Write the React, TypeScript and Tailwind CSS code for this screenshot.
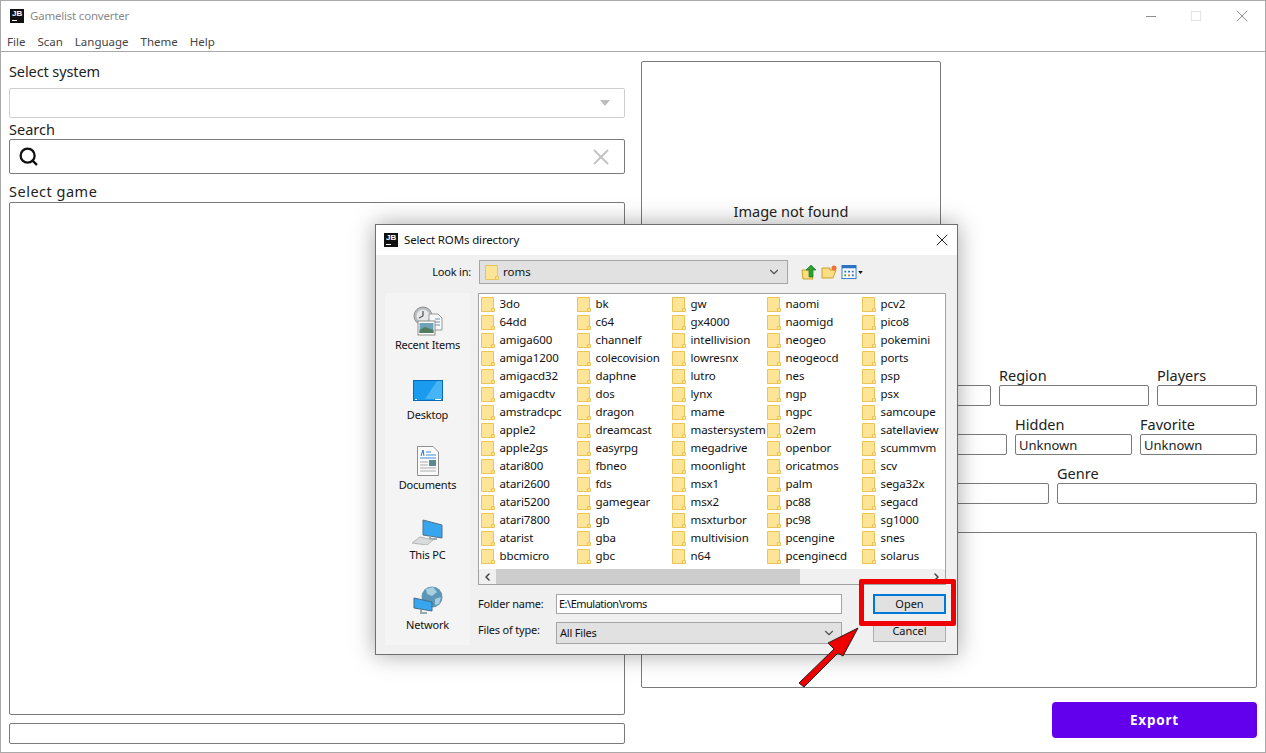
import { Search, X, ChevronDown, ChevronLeft, ChevronRight } from "lucide-react";

const columns = [
  ["3do", "64dd", "amiga600", "amiga1200", "amigacd32", "amigacdtv", "amstradcpc", "apple2", "apple2gs", "atari800", "atari2600", "atari5200", "atari7800", "atarist", "bbcmicro"],
  ["bk", "c64", "channelf", "colecovision", "daphne", "dos", "dragon", "dreamcast", "easyrpg", "fbneo", "fds", "gamegear", "gb", "gba", "gbc"],
  ["gw", "gx4000", "intellivision", "lowresnx", "lutro", "lynx", "mame", "mastersystem", "megadrive", "moonlight", "msx1", "msx2", "msxturbor", "multivision", "n64"],
  ["naomi", "naomigd", "neogeo", "neogeocd", "nes", "ngp", "ngpc", "o2em", "openbor", "oricatmos", "palm", "pc88", "pc98", "pcengine", "pcenginecd"],
  ["pcv2", "pico8", "pokemini", "ports", "psp", "psx", "samcoupe", "satellaview", "scummvm", "scv", "sega32x", "segacd", "sg1000", "snes", "solarus"],
];

const columnWidths = ["w-[96px]", "w-[95px]", "w-[95px]", "w-[95px]", "w-[84px]"];

function JbLogo() {
  return (
    <div className="flex h-[14px] w-[14px] shrink-0 flex-col items-start bg-[#111] px-[2px] pt-[1px] text-white">
      <span className="text-[8px] font-bold leading-[8px] font-['Liberation_Sans',sans-serif]">JB</span>
      <span className="mt-[1.5px] h-[1px] w-[5px] bg-white" />
    </div>
  );
}

function Folder({ className = "h-[15px] w-[14px]" }: { className?: string }) {
  return (
    <svg viewBox="0 0 14 15" className={`shrink-0 ${className}`}>
      <path d="M0.5 0.5H12.5V11.5H13.5V14.5H0.5Z" fill="#fde496" stroke="#eac555" />
      <path d="M12.5 11.5H10.5V14.5" fill="none" stroke="#eac555" />
    </svg>
  );
}

function TextBox({ className = "", children }: { className?: string; children?: string }) {
  return (
    <div className={`flex h-[21px] items-center rounded-[2px] border border-[#7a7a7a] bg-white px-[3px] pt-[2px] text-[13px] text-[#222] ${className}`}>
      {children}
    </div>
  );
}

function Field({ label, className, value }: { label: string; className: string; value?: string }) {
  return (
    <div className={`flex flex-col ${className}`}>
      <span className="h-[20px] text-[14.5px] leading-[20px] text-[#222]">{label}</span>
      <TextBox>{value}</TextBox>
    </div>
  );
}

function RecentIcon() {
  return (
    <svg viewBox="0 0 30 30" className="h-[30px] w-[30px]">
      <circle cx="10" cy="10" r="9" fill="#b9bdc1" stroke="#8a8d90" />
      <circle cx="10" cy="10" r="6.5" fill="#e6e8ea" />
      <path d="M10 5V10L6 12" fill="none" stroke="#333" />
      <path d="M16 8H25L29 12V24H16Z" fill="#f7f7f7" stroke="#9a9a9a" />
      <path d="M22 13H27M22 16H27M22 19H27" stroke="#6b93c2" />
      <rect x="5" y="15" width="17" height="14" fill="#fff" stroke="#8c8c8c" />
      <rect x="6.5" y="17" width="14" height="10" fill="#6fa3b8" />
      <path d="M6.5 24L12 21L20.5 24V27H6.5Z" fill="#4e7d62" />
    </svg>
  );
}

function DesktopIcon() {
  return (
    <svg viewBox="0 0 30 22" className="mb-[4px] h-[22px] w-[30px]">
      <rect x="0.5" y="0.5" width="29" height="20" fill="#1a9bef" stroke="#0a69b4" />
      <path d="M12 19L24 1H29V19Z" fill="#46b4f5" />
      <path d="M2 19.5H4M22 19.5H28" stroke="#fff" />
    </svg>
  );
}

function DocumentIcon() {
  return (
    <svg viewBox="0 0 22 30" className="h-[30px] w-[22px]">
      <path d="M0.5 0.5H16L21.5 6V29.5H0.5Z" fill="#fbfbfb" stroke="#8f8f8f" />
      <path d="M4 10L6 4L7 10" fill="none" stroke="#1a7bd0" />
      <path d="M9 6H14M9 9H19M3 12H19" stroke="#3d8fd6" />
      <path d="M3 16H11M3 19H11M3 22H19M3 25H19" stroke="#aaa" />
      <rect x="12" y="14" width="7" height="6" fill="#5d8a8c" />
    </svg>
  );
}

function PcIcon() {
  return (
    <svg viewBox="0 0 32 26" className="mb-[1px] h-[26px] w-[32px]">
      <path d="M11 1L30 6V19L11 16Z" fill="#38a6ef" stroke="#54708a" />
      <path d="M18 17V20H25" fill="none" stroke="#9aa" strokeWidth="2" />
      <path d="M0 24L8 18L21 21L15 26Z" fill="#d9dcde" stroke="#b5b5b5" />
    </svg>
  );
}

function NetworkIcon() {
  return (
    <svg viewBox="0 0 30 30" className="h-[30px] w-[30px]">
      <circle cx="19" cy="11" r="10.5" fill="#5c97b8" />
      <path d="M13 3L20 1L24 6L19 10L14 8ZM22 13L28 11L26 18L22 19Z" fill="#a7cfe0" />
      <path d="M1 12L19 16V25L1 22Z" fill="#38a6ef" stroke="#456a86" />
      <path d="M8 24V27H14" fill="none" stroke="#9aa" strokeWidth="2" />
    </svg>
  );
}

function Place({ label, children }: { label: string; children: React.ReactNode }) {
  return (
    <div className="flex h-[70px] shrink-0 flex-col items-center justify-end pb-[11px]">
      {children}
      <span className="mt-[2px] text-[11px] leading-[14px] tracking-[-0.2px] text-[#111]">{label}</span>
    </div>
  );
}

function FileDialog() {
  return (
    <div className="absolute top-[223px] left-[374px] flex h-[431px] w-[583px] flex-col border border-[#6f6f6f] bg-[#f0f0f0] text-[11px] text-[#111] shadow-[0_0_22px_rgba(0,0,0,0.35)] font-['Noto_Sans',sans-serif]">
      <div className="flex h-[30px] shrink-0 items-center bg-white pr-[5px] pl-[8px]">
        <JbLogo />
        <span className="ml-[6px] text-[11.5px] tracking-[-0.15px]">Select ROMs directory</span>
        <X className="ml-auto h-[20px] w-[20px] text-[#222]" strokeWidth={1.2} />
      </div>
      <div className="mt-[5px] flex h-[24px] shrink-0 items-center">
        <span className="w-[103px] pr-[8px] text-right tracking-[-0.2px]">Look in:</span>
        <div className="flex h-[24px] w-[309px] items-center border border-[#a5a5a5] bg-[#e1e1e1] pr-[6px] pl-[5px]">
          <Folder className="h-[15px] w-[14px]" />
          <span className="ml-[4px] text-[11.5px]">roms</span>
          <ChevronDown className="ml-auto h-[14px] w-[14px] text-[#555]" />
        </div>
        <svg viewBox="0 0 16 16" className="ml-[13px] h-[16px] w-[16px]">
          <path d="M1 6H9L12 15H2Z" fill="#fbdd84" stroke="#c9a227" />
          <path d="M8 13V6H5L10 1L15 6H12V13Z" fill="#2e9e35" stroke="#1c7a24" strokeWidth="0.7" />
        </svg>
        <svg viewBox="0 0 16 16" className="ml-[4px] h-[16px] w-[16px]">
          <path d="M1 4H9V6H15L12 14H1Z" fill="#fbdd84" stroke="#c9a227" />
          <circle cx="13" cy="4" r="2.5" fill="#f0733a" />
        </svg>
        <svg viewBox="0 0 16 16" className="ml-[4px] h-[15px] w-[16px]">
          <rect x="0.5" y="0.5" width="15" height="14" fill="#fff" stroke="#2a72c5" />
          <rect x="0.5" y="0.5" width="15" height="3" fill="#2a72c5" />
          <path d="M3 6H5V8H3ZM7 6H9V8H7ZM11 6H13V8H11Z" fill="#2a72c5" />
          <path d="M3 10H5V12H3Z" fill="#3a9a3a" />
          <path d="M7 10H9V12H7Z" fill="#d06a2a" />
          <path d="M11 10H13V12H11Z" fill="#2a72c5" />
        </svg>
        <svg viewBox="0 0 6 4" className="ml-[1px] h-[3px] w-[5px]">
          <path d="M0 0H6L3 4Z" fill="#111" />
        </svg>
      </div>
      <div className="mt-[9px] flex min-h-0 flex-1 pl-[9px]">
        <div className="flex h-[352px] w-[85px] shrink-0 flex-col bg-[#f4f4f4]">
          <Place label="Recent Items"><RecentIcon /></Place>
          <Place label="Desktop"><DesktopIcon /></Place>
          <Place label="Documents"><DocumentIcon /></Place>
          <Place label="This PC"><PcIcon /></Place>
          <Place label="Network"><NetworkIcon /></Place>
        </div>
        <div className="ml-[8px] flex w-[468px] flex-col">
          <div className="flex h-[292px] flex-col border border-[#a0a0a0] bg-white">
            <div className="flex min-h-0 flex-1 pl-[2px]">
              {columns.map((col, i) => (
                <div key={i} className={`shrink-0 ${columnWidths[i]}`}>
                  <div className="flex flex-col pt-[1px]">
                    {col.map((name) => (
                      <div key={name} className="flex h-[18px] items-center">
                        <Folder />
                        <span className="ml-[4.5px] whitespace-nowrap text-[11.5px] leading-[18px] tracking-[-0.1px]">{name}</span>
                      </div>
                    ))}
                  </div>
                </div>
              ))}
            </div>
            <div className="flex h-[15px] shrink-0 items-center bg-[#f0f0f0]">
              <ChevronLeft className="h-[12px] w-[17px] shrink-0 text-[#444]" strokeWidth={3} />
              <div className="h-full w-[304px] bg-[#cdcdcd]" />
              <ChevronRight className="mr-[1px] ml-auto h-[12px] w-[15px] text-[#444]" strokeWidth={3} />
            </div>
          </div>
          <div className="mt-[9px] flex h-[20px] items-center">
            <span className="w-[78px] tracking-[-0.2px]">Folder name:</span>
            <div className="flex h-[20px] w-[286px] items-center border border-[#a5a5a5] bg-white pl-[2px] tracking-[-0.5px]">E:\Emulation\roms</div>
          </div>
          <div className="mt-[8px] flex h-[22px]">
            <span className="w-[78px] tracking-[-0.2px]">Files of type:</span>
            <div className="flex h-[22px] w-[286px] items-center border border-[#a5a5a5] bg-[#e1e1e1] pr-[5px] pl-[3px] tracking-[-0.2px]">
              All Files
              <ChevronDown className="ml-auto h-[14px] w-[14px] text-[#555]" />
            </div>
          </div>
        </div>
      </div>
      {/* buttons sit over the lower right corner of the dialog */}
      <div className="absolute top-[369px] left-[497px] flex w-[73px] flex-col gap-[7px]">
        <div className="flex h-[20px] items-center justify-center border-2 border-[#0078d7] bg-[#e1e1e1]">Open</div>
        <div className="flex h-[21px] items-center justify-center border border-[#adadad] bg-[#e1e1e1]">Cancel</div>
      </div>
    </div>
  );
}

export default function App() {
  return (
    <div className="relative flex h-[753px] w-[1266px] flex-col overflow-hidden border border-[#a9a9a9] bg-white text-[#222] font-['Noto_Sans',sans-serif]">
      <div className="flex h-[30px] shrink-0 items-center pr-[13px] pl-[9px]">
        <JbLogo />
        <span className="ml-[6px] text-[11.5px] tracking-[-0.2px] text-[#8a8a8a]">Gamelist converter</span>
        <span className="ml-auto h-[1px] w-[10px] bg-[#8f8f8f]" />
        <span className="ml-[35px] h-[10px] w-[10px] border border-[#e3e3e3]" />
        <X className="ml-[31px] h-[20px] w-[20px] text-[#8f8f8f]" strokeWidth={1.2} />
      </div>
      <div className="flex h-[21px] shrink-0 items-center gap-[12px] border-b border-[#a9a9a9] pt-[2px] pl-[6px] text-[11.5px] text-[#444]">
        <span>File</span>
        <span>Scan</span>
        <span>Language</span>
        <span>Theme</span>
        <span>Help</span>
      </div>
      <div className="flex min-h-0 flex-1 gap-[16px] px-[8px]">
        <div className="flex w-[616px] flex-col">
          <span className="mt-[9px] h-[20px] text-[14.5px] leading-[20px] tracking-[-0.1px]">Select system</span>
          <div className="mt-[7px] flex h-[30px] items-center justify-end rounded-[2px] border border-[#cfcfcf] pr-[14px]">
            <svg viewBox="0 0 10 6" className="h-[6px] w-[10px]">
              <path d="M0 0H10L5 6Z" fill="#bdbdbd" />
            </svg>
          </div>
          <span className="mt-[1px] h-[20px] text-[14.5px] leading-[20px]">Search</span>
          <div className="flex h-[35px] items-center rounded-[2px] border border-[#7a7a7a] pr-[10px] pl-[8px]">
            <Search className="h-[21px] w-[21px] text-[#111]" strokeWidth={2.6} />
            <X className="ml-auto h-[26px] w-[26px] text-[#c4c4c4]" strokeWidth={1.8} />
          </div>
          <span className="mt-[7px] h-[20px] text-[14.5px] leading-[20px] tracking-[0.5px]">Select game</span>
          <div className="mt-[1px] h-[513px] rounded-[2px] border border-[#7a7a7a]" />
          <TextBox className="mt-[8px]" />
        </div>
        <div className="flex w-[616px] flex-col">
          <div className="mt-[9px] flex h-[300px] w-[300px] items-center justify-center rounded-[2px] border border-[#7a7a7a] pt-[2px] text-[14.5px]">
            Image not found
          </div>
          <div className="mt-[4px] flex gap-[8px]">
            <Field label="" className="flex-1" />
            <Field label="Region" className="w-[150px]" />
            <Field label="Players" className="w-[100px]" />
          </div>
          <div className="mt-[8px] flex gap-[8px]">
            <Field label="" className="flex-1" />
            <Field label="Hidden" className="w-[117px]" value="Unknown" />
            <Field label="Favorite" className="w-[117px]" value="Unknown" />
          </div>
          <div className="mt-[8px] flex gap-[8px]">
            <Field label="" className="flex-1" />
            <Field label="Genre" className="w-[200px]" />
          </div>
          <div className="mt-[28px] h-[156px] rounded-[2px] border border-[#7a7a7a]" />
          <div className="mt-[14px] ml-auto flex h-[36px] w-[205px] items-center justify-center rounded-[4px] bg-[#6200ee] text-[13.5px] font-bold tracking-[0.8px] text-white">
            Export
          </div>
        </div>
      </div>
      <FileDialog />
      {/* red annotation drawn over the screenshot */}
      <div className="absolute top-[578px] left-[858px] h-[47px] w-[97px] rounded-[2px] border-[5px] border-[#f00000]" />
      <svg viewBox="0 0 60 62" className="absolute top-[625px] left-[798px] h-[62px] w-[60px]">
        <path d="M59 2L29 17L35 23L0 57L5 61L39 27L44 30Z" fill="#ee0000" stroke="#222" strokeWidth="1" />
      </svg>
    </div>
  );
}
